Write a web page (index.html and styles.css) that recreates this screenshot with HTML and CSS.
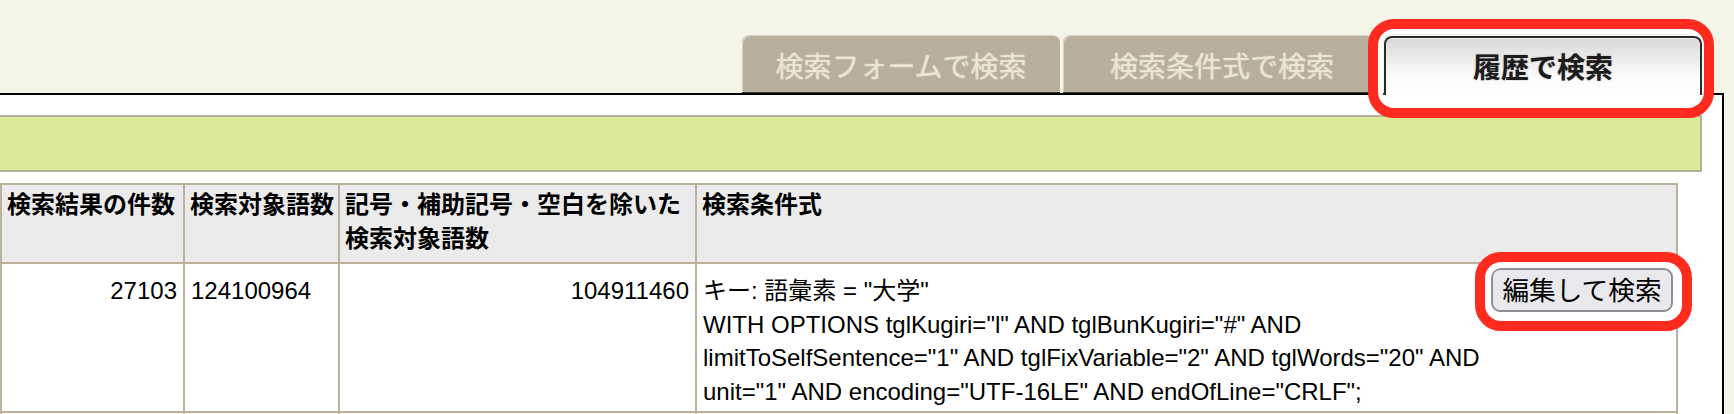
FILE: index.html
```html
<!DOCTYPE html>
<html lang="ja">
<head>
<meta charset="utf-8">
<title>履歴で検索</title>
<link rel="stylesheet" href="styles.css">
</head>
<body>
<div class="page">
  <nav class="tabs">
    <div class="tab">検索フォームで検索</div>
    <div class="tab">検索条件式で検索</div>
    <div class="tab tab-active">履歴で検索</div>
  </nav>
  <main class="panel">
    <div class="bar"></div>
    <table class="history">
      <thead>
        <tr>
          <th class="c1">検索結果の件数</th>
          <th class="c2">検索対象語数</th>
          <th class="c3">記号・補助記号・空白を除いた検索対象語数</th>
          <th class="c4">検索条件式</th>
        </tr>
      </thead>
      <tbody>
        <tr>
          <td class="num">27103</td>
          <td class="left">124100964</td>
          <td class="num">104911460</td>
          <td class="cond-cell">
            <div class="cond">
              <div class="cond-text">キー: 語彙素 = "大学"<br>WITH OPTIONS tglKugiri="l" AND tglBunKugiri="#" AND limitToSelfSentence="1" AND tglFixVariable="2" AND tglWords="20" AND unit="1" AND encoding="UTF-16LE" AND endOfLine="CRLF";</div>
              <button class="edit" type="button">編集して検索</button>
            </div>
          </td>
        </tr>
        <tr class="next">
          <td>&nbsp;</td>
          <td>&nbsp;</td>
          <td>&nbsp;</td>
          <td>&nbsp;</td>
        </tr>
      </tbody>
    </table>
  </main>
  <div class="mark mark-tab"></div>
  <div class="mark mark-btn"></div>
</div>
</body>
</html>
```
FILE: styles.css
```css
* { box-sizing: border-box; }
html, body {
  margin: 0;
  padding: 0;
  overflow: hidden;
}
body {
  background: #f4f4e8;
  font-family: "Liberation Sans", "Noto Sans CJK JP", sans-serif;
  color: #000;
}
.page {
  position: relative;
  width: 1734px;
  height: 414px;
  overflow: hidden;
}
.tabs {
  display: flex;
  justify-content: flex-end;
  align-items: flex-end;
  gap: 3px;
  height: 93px;
  padding-right: 32px;
}
.tab {
  width: 318px;
  height: 58px;
  padding-top: 2px;
  border-radius: 8px 8px 0 0;
  background: #b8b09c;
  box-shadow: inset 0 -1px 0 #3c3a34, inset 1px 1px 0 rgba(255,255,255,0.45);
  color: #ece6d3;
  font-family: "Noto Sans CJK JP", sans-serif;
  font-size: 28px;
  line-height: 56px;
  text-align: center;
  text-shadow: 0 0 1.5px rgba(236,230,211,0.9);
  white-space: nowrap;
}
.tab-active {
  position: relative;
  z-index: 1;
  height: 59px;
  margin-bottom: -2px;
  padding-top: 0;
  border: 2px solid #2b2b2b;
  border-bottom: 0;
  background: linear-gradient(to bottom, #d9d9d9 0%, #ebebeb 35%, #fbfbfb 70%, #fff 100%);
  box-shadow: inset 0 1px 0 #f4f4f4;
  color: #1c1c1c;
  font-weight: 700;
  line-height: 57px;
  text-shadow: 0 0 1.5px rgba(0,0,0,0.4);
}
.panel {
  margin-left: -24px;
  width: 1748px;
  min-height: 400px;
  border: 2px solid #000;
  background: #fff;
  padding: 20px 20px 0;
}
.bar {
  height: 57px;
  border: 2px solid #b6af9c;
  background: #dae996;
  margin-bottom: 11px;
}
.history {
  margin-left: 2px;
  width: 1678px;
  table-layout: fixed;
  border-collapse: separate;
  border-spacing: 0;
  border-top: 2px solid #bab29e;
  border-left: 2px solid #bab29e;
  font-size: 24px;
}
.history th,
.history td {
  border-right: 2px solid #bab29e;
  border-bottom: 2px solid #bab29e;
}
.history th {
  background: #ebebeb;
  font-weight: 700;
  text-align: left;
  vertical-align: top;
  padding: 3px 2px 6px 5px;
  line-height: 34px;
}
.c1 { width: 183px; }
.c2 { width: 155px; }
.c3 { width: 357px; }
.history td {
  padding: 10px 6px 3px;
  line-height: 1.4;
  vertical-align: baseline;
  background: #fff;
}
.num { text-align: right; }
.left { text-align: left; }
.history td.cond-cell {
  padding: 10px 3px 3px 6px;
}
.cond {
  display: flex;
  align-items: flex-start;
  gap: 10px;
}
.cond-text {
  flex: 1;
  min-width: 0;
}
.edit {
  flex: none;
  width: 182px;
  height: 44px;
  margin-top: -6px;
  padding: 0 0 2px;
  border: 2px solid #8e8e95;
  border-radius: 9px;
  background: #e9e9ed;
  color: #000;
  font-family: "Noto Sans CJK JP", sans-serif;
  font-size: 26.67px;
  line-height: 38px;
  white-space: nowrap;
}
.next td { height: 60px; }
.mark {
  position: absolute;
  border: 10px solid #ff2b1f;
  border-radius: 26px;
  pointer-events: none;
}
.mark-tab {
  left: 1368px;
  top: 19px;
  width: 346px;
  height: 99px;
  box-shadow: inset 0 0 0 5px #fff;
}
.mark-btn {
  left: 1475px;
  top: 252px;
  width: 217px;
  height: 79px;
  box-shadow: inset 0 0 0 6px #fff;
}
```
